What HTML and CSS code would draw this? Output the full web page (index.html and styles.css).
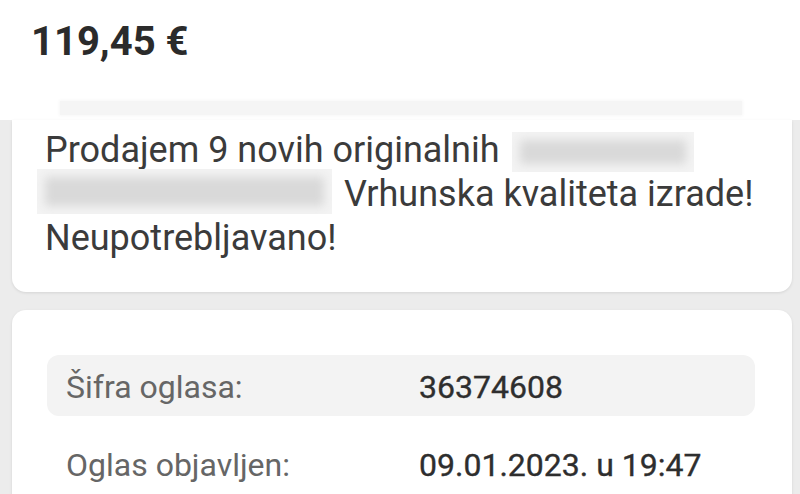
FILE: index.html
```html
<!DOCTYPE html>
<html lang="hr">
<head>
<meta charset="utf-8">
<title>Oglas</title>
<link rel="stylesheet" href="styles.css">
</head>
<body>
<header class="top">
  <div class="price">119,45 €</div>
  <div class="strip"></div>
</header>
<section class="card desc">
  <div class="line">Prodajem 9 novih originalnih <span class="redact r1"></span></div>
  <div class="line"><span class="redact r2"></span> Vrhunska kvaliteta izrade!</div>
  <div class="line">Neupotrebljavano!</div>
</section>
<section class="card info">
  <div class="row shaded">
    <span class="label">Šifra oglasa:</span>
    <span class="value">36374608</span>
  </div>
  <div class="row">
    <span class="label">Oglas objavljen:</span>
    <span class="value">09.01.2023. u 19:47</span>
  </div>
</section>
</body>
</html>
```
FILE: styles.css
```css
html, body {
  margin: 0;
  padding: 0;
}
body {
  background: #ececec;
  font-family: Roboto, "Liberation Sans", Arial, sans-serif;
  width: 800px;
  height: 494px;
  overflow: hidden;
}
.top {
  background: #ffffff;
  padding: 22px 0 5px 0;
}
.price {
  font-size: 40px;
  line-height: 40px;
  font-weight: 700;
  color: #2b2b2b;
  padding-left: 31px;
}
.strip {
  margin: 39px 0 0 60px;
  width: 682px;
  height: 14px;
  background: #f5f5f5;
  box-shadow: 0 0 3px 1px #f7f7f7;
}
.card {
  background: #ffffff;
  margin: 0 8px 0 12px;
  box-shadow: 0 1px 3px rgba(0,0,0,0.10);
}
.desc {
  border-radius: 0 0 14px 14px;
  padding: 8px 20px 32px 33px;
  color: #3b3b3b;
  font-size: 36px;
}
.line {
  height: 44px;
  line-height: 44px;
  white-space: nowrap;
}
.redact {
  display: inline-block;
  background: #d9d9d9;
  box-shadow: inset 0 0 10px 8px #f3f3f3;
}
.r1 {
  width: 182px;
  height: 40px;
  margin-top: -4px;
  vertical-align: -10px;
  margin-left: 3px;
}
.r2 {
  width: 295px;
  height: 45px;
  margin-top: -4px;
  vertical-align: -8px;
  margin-left: -8px;
  margin-right: 3px;
}
.info {
  margin-top: 18px;
  border-radius: 14px 14px 0 0;
  padding: 45px 37px 40px 35px;
  height: 300px;
}
.row {
  display: grid;
  grid-template-columns: 353px 1fr;
  height: 57px;
  padding: 4px 0 0 19px;
  line-height: 57px;
  font-size: 32px;
  border-radius: 12px;
}
.row + .row {
  margin-top: 17px;
}
.shaded {
  background: #f3f3f3;
}
.label {
  color: #666666;
}
.value {
  color: #2e2e2e;
  font-weight: 400;
  -webkit-text-stroke: 0.35px #2e2e2e;
}
```
